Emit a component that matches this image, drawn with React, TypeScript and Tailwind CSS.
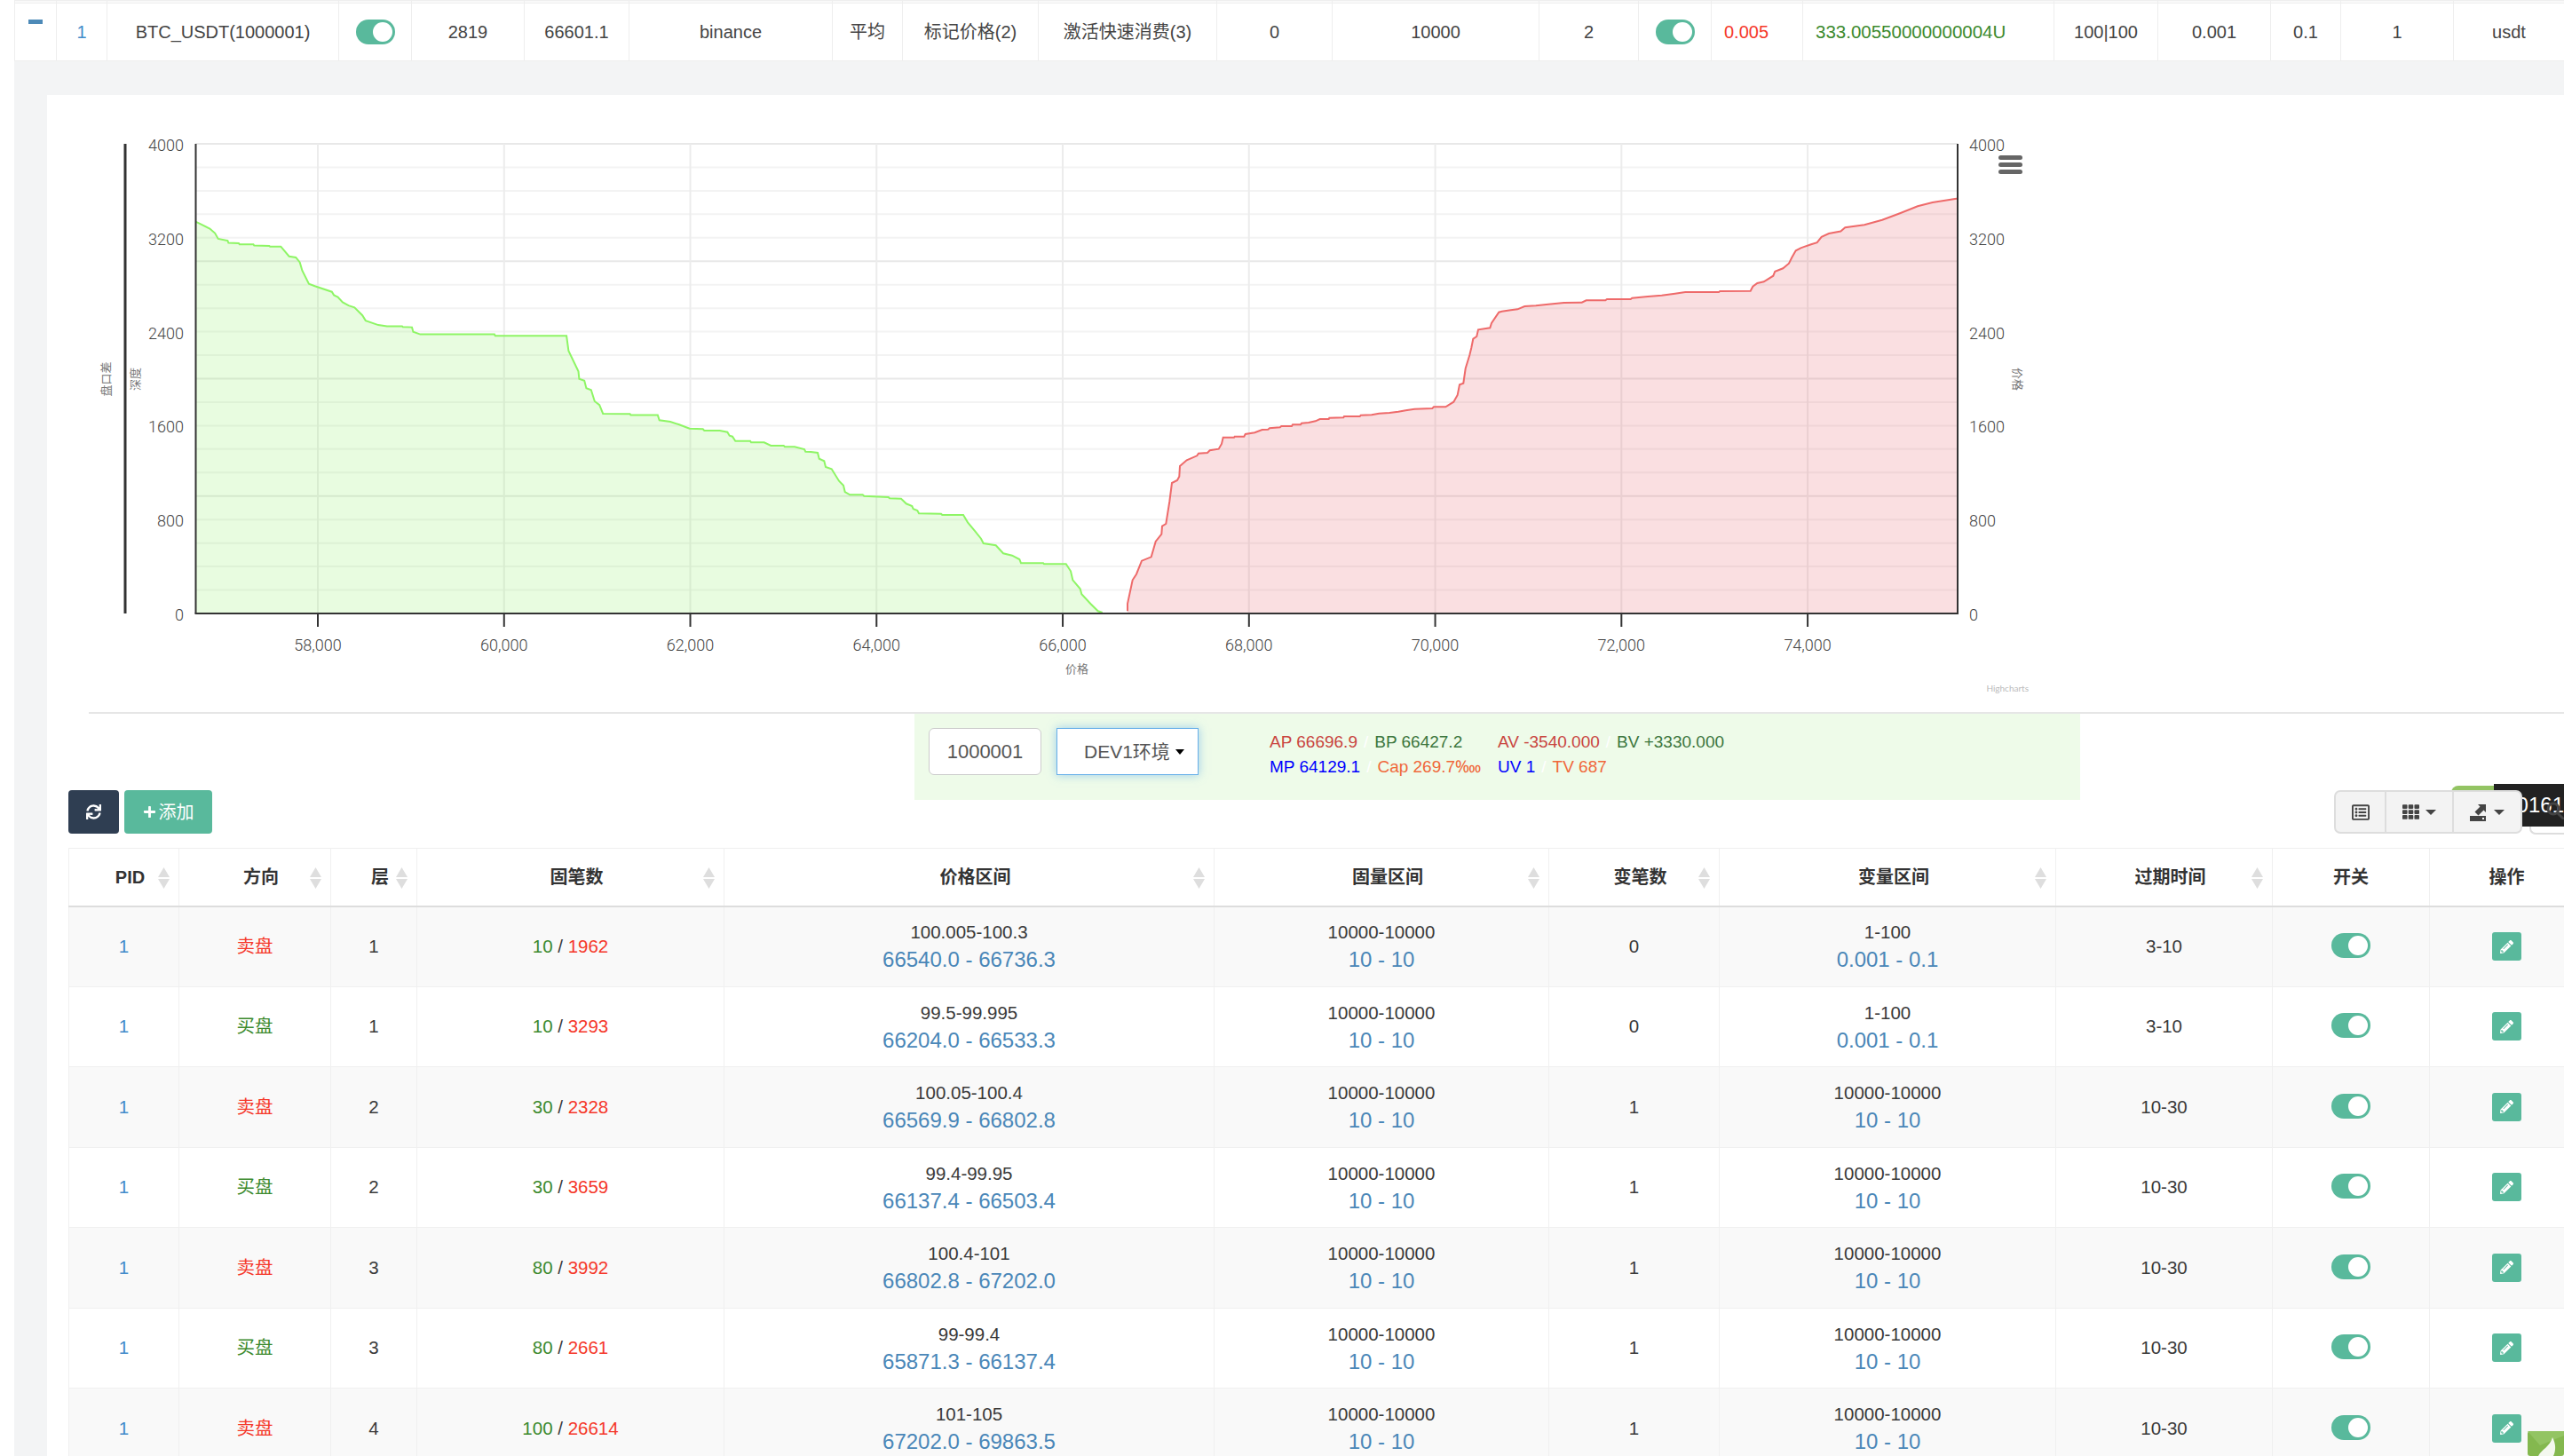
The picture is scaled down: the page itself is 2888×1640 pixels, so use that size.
import React from "react";
import { FaSync, FaPlus, FaPencilAlt, FaTh, FaRegListAlt } from "react-icons/fa";

type P = [number, number];
const map = (pts: P[], ox: number, oy: number, sx: number, sy: number): P[] =>
  pts.map(([x, y]) => [ox + x / sx, oy + y / sy]);

const green: P[] = [
  ...map([[360,285],[366,288],[395,303],[408,315],[416,330],[440,335],[442,341],[468,342],[470,345],[505,345],[507,348],[545,349],[547,351],[574,351],[595,377],[612,380],[622,393],[628,415],[645,451],[660,457],[703,472],[708,481],[718,486],[730,500],[745,509],[760,514],[780,535],[788,549],[820,561],[842,564],[880,564],[882,566],[905,567],[908,579],[926,586],[1113,586],[1115,590],[1295,590],[1300,630],[1325,685],[1327,705],[1340,710],[1345,730],[1357,735],[1366,765],[1378,775],[1387,798],[1455,799],[1457,802],[1525,802]], 60, 130, 2.24, 2.376),
  ...map([[8,100],[45,105],[75,115],[110,128],[155,130],[160,135],[212,135],[238,140],[245,152],[255,155],[265,170],[315,170],[318,175],[362,175],[385,186],[428,186],[432,190],[465,190],[498,198],[502,206],[520,207],[543,210],[548,230],[565,238],[570,258],[590,265],[615,305],[630,320],[635,342],[652,352],[695,352],[700,356],[782,360],[786,364],[825,365],[842,382],[862,390],[866,400],[880,405],[885,415],[960,416],[964,420],[1035,420],[1050,445],[1075,475],[1095,500],[1103,516],[1145,523],[1170,550],[1200,557]], 740, 440, 3, 3),
  ...map([[145,270],[150,283],[225,283],[228,286],[302,286],[318,310],[325,340],[350,370],[355,388],[385,420],[410,445],[425,450]], 1100, 540, 3, 3),
];

const red: P[] = [
  ...map([[510,445],[510,420],[527,340],[540,320],[558,275],[590,262],[605,210],[625,185],[627,158],[640,150],[652,75],[660,12]], 1100, 540, 3, 3),
  ...map([[60,612],[78,603],[85,590],[87,555],[110,535],[145,520],[150,512],[180,510],[188,502],[218,497],[228,480],[233,458],[270,458],[272,455],[304,455],[308,447],[340,442],[365,432],[385,431],[390,427],[425,424],[430,420],[465,420],[468,415],[495,415],[498,410],[522,408],[545,403],[560,396],[590,396],[592,392],[640,391],[642,387],[695,387],[698,383],[735,382],[760,377],[795,375],[825,371],[850,367],[880,362],[940,360],[945,355],[985,355],[1012,338],[1025,315],[1032,280],[1045,275],[1052,225],[1066,180],[1072,155],[1078,125],[1090,117],[1095,94],[1135,88],[1140,72],[1165,35],[1175,32]], 1300, 340, 3, 3),
  ...map([[185,328],[208,325],[232,315],[270,313],[312,308],[365,303],[425,302],[440,295],[505,295],[510,291],[590,291],[595,287],[648,282],[695,278],[740,272],[775,267],[888,267],[892,264],[995,263],[1003,248],[1018,237],[1040,232],[1072,212],[1078,197],[1105,187],[1125,170],[1135,150],[1148,127],[1165,118]], 1640, 240, 3, 3),
  ...map([[420,345],[440,340],[455,325],[480,316],[520,310],[535,300],[600,293],[660,280],[720,262],[780,243],[830,233],[916,222]], 1900, 130, 3, 2.376),
];

const line = (pts: P[]) => pts.map(([x, y], i) => `${i ? "L" : "M"}${x.toFixed(1)} ${y.toFixed(1)}`).join(" ");
const area = (pts: P[]) => `${line(pts)} L${pts[pts.length - 1][0].toFixed(1)} 691 L${pts[0][0].toFixed(1)} 691 Z`;

const L = 220.5, R = 2205, T = 162, B = 691;
const minors = Array.from({ length: 21 }, (_, i) => i);
const yLabels = ["0", "800", "1600", "2400", "3200", "4000"];
const xTicks = [58, 60, 62, 64, 66, 68, 70, 72, 74];
const xOf = (k: number) => 358 + (k - 58) * 104.88;
const chartFont = "Roboto, sans-serif";

function Chart() {
  return (
    <svg width="2300" height="695" viewBox="53 107 2300 695" className="block">
      {minors.map((i) => {
        const y = B - (i * (B - T)) / 20;
        return <line key={i} x1={L} x2={R} y1={y} y2={y} stroke={i % 5 === 0 ? "#e8e8e8" : "#f3f3f3"} strokeWidth="2" />;
      })}
      {xTicks.map((k) => (
        <line key={k} x1={xOf(k)} x2={xOf(k)} y1={T} y2={B} stroke="#ececec" strokeWidth="2" />
      ))}
      <path d={area(green)} fill="#8ef265" fillOpacity="0.2" />
      <path d={area(red)} fill="#e6505a" fillOpacity="0.18" />
      <path d={line(green)} fill="none" stroke="#8ef565" strokeWidth="2" />
      <path d={line(red)} fill="none" stroke="#ee6a6a" strokeWidth="2" />
      <rect x="139.5" y={T} width="3" height={B - T} fill="#333" />
      <line x1={L} x2={L} y1={T} y2={B} stroke="#333" strokeWidth="2" />
      <line x1={R} x2={R} y1={T} y2={B} stroke="#333" strokeWidth="2" />
      <line x1={L - 1} x2={R + 1} y1={B} y2={B} stroke="#333" strokeWidth="2" />
      {xTicks.map((k) => (
        <g key={k}>
          <line x1={xOf(k)} x2={xOf(k)} y1={B} y2={B + 15} stroke="#333" strokeWidth="2" />
          <text x={xOf(k)} y="733" textAnchor="middle" fontSize="18" fontWeight="300" fill="#444" fontFamily={chartFont}>
            {k},000
          </text>
        </g>
      ))}
      {yLabels.map((t, i) => {
        const y = B - (i * (B - T)) / 5 + 8;
        return (
          <g key={t}>
            <text x="207" y={y} textAnchor="end" fontSize="18" fontWeight="300" fill="#444" fontFamily={chartFont}>{t}</text>
            <text x="2218" y={y} fontSize="18" fontWeight="300" fill="#444" fontFamily={chartFont}>{t}</text>
          </g>
        );
      })}
      <text transform="translate(124 427) rotate(-90)" textAnchor="middle" fontSize="13" fill="#777" fontFamily="'Noto Sans CJK SC', sans-serif">盘口差</text>
      <text transform="translate(157 427) rotate(-90)" textAnchor="middle" fontSize="13" fill="#777" fontFamily="'Noto Sans CJK SC', sans-serif">深度</text>
      <text transform="translate(2268 427) rotate(90)" textAnchor="middle" fontSize="13" fill="#777" fontFamily="'Noto Sans CJK SC', sans-serif">价格</text>
      <text x="1213" y="758" textAnchor="middle" fontSize="13" fill="#777" fontFamily="'Noto Sans CJK SC', sans-serif">价格</text>
      <text x="2285" y="779" textAnchor="end" fontSize="10" fill="#bbb" fontFamily="Lato, sans-serif">Highcharts</text>
      <g fill="#666">
        <rect x="2251" y="175" width="27" height="5" rx="2.5" />
        <rect x="2251" y="183" width="27" height="5" rx="2.5" />
        <rect x="2251" y="191" width="27" height="5" rx="2.5" />
      </g>
    </svg>
  );
}

function Switch() {
  return (
    <div className="inline-flex w-[44px] h-[28px] rounded-full bg-[#59b99c] items-center justify-end pr-[3px] align-middle">
      <div className="w-[22px] h-[22px] rounded-full bg-white" />
    </div>
  );
}

function Sort() {
  return (
    <svg width="13" height="24" viewBox="0 0 13 24" className="absolute right-[10px] top-[21px]">
      <path d="M6.5 0 L13 11 L0 11 Z M0 13 L13 13 L6.5 24 Z" fill="#dedede" />
    </svg>
  );
}

const topCols = [47, 57, 261, 82, 127, 118, 229, 79, 153, 201, 130, 233, 112, 82, 103, 283, 117, 127, 79, 127, 125];
const td = "border border-[#eeeeee] text-center text-[20px] text-[#444] whitespace-nowrap";

function TopTable() {
  return (
    <table className="table-fixed border-collapse w-[2872px] bg-white">
      <colgroup>
        {topCols.map((w, i) => (
          <col key={i} style={{ width: w }} />
        ))}
      </colgroup>
      <tbody>
        <tr className="h-[3px] bg-[#f9f9f9]">
          {topCols.map((_, i) => (
            <td key={i} className="border border-[#eeeeee] p-0 leading-[0px] text-[0px]" />
          ))}
        </tr>
        <tr className="h-[65px]">
          <td className={td}>
            <div className="w-[16px] h-[5px] bg-[#4d8ab8] ml-[15px] -mt-[14px]" />
          </td>
          <td className={td + " !text-[#428bca]"}>1</td>
          <td className={td}>BTC_USDT(1000001)</td>
          <td className={td}><div className="-mt-[3px]"><Switch /></div></td>
          <td className={td}>2819</td>
          <td className={td}>66601.1</td>
          <td className={td}>binance</td>
          <td className={td}>平均</td>
          <td className={td}>标记价格(2)</td>
          <td className={td}>激活快速消费(3)</td>
          <td className={td}>0</td>
          <td className={td}>10000</td>
          <td className={td}>2</td>
          <td className={td}><div className="-mt-[3px]"><Switch /></div></td>
          <td className={td + " !text-left pl-[14px] !text-[#f5382a]"}>0.005</td>
          <td className={td + " !text-left pl-[14px] !text-[#3c8a2e] !text-[20.5px]"}>333.00550000000004U</td>
          <td className={td}>100|100</td>
          <td className={td}>0.001</td>
          <td className={td}>0.1</td>
          <td className={td}>1</td>
          <td className={td}>usdt</td>
        </tr>
      </tbody>
    </table>
  );
}

const R1 = "text-[#c9453f]";
const G1 = "text-[#3c763d]";
const B1 = "text-[#0000ff]";
const O1 = "text-[#f0683a]";

function InfoBar() {
  const Sep = () => <span className="text-white mx-[7px]">/</span>;
  return (
    <div className="ml-[977px] w-[1313px] h-[97px] bg-[#eefbe9] flex items-start pl-[16px] pt-[16px]">
      <div className="w-[127px] h-[53px] border border-[#cccccc] rounded-[6px] bg-white flex items-center justify-center text-[22px] text-[#555]">
        1000001
      </div>
      <div className="ml-[17px] w-[160px] h-[53px] border border-[#66afe9] bg-white flex items-center pl-[30px] text-[21px] text-[#555] shadow-[0_0_10px_rgba(102,175,233,0.6)]">
        DEV1环境
        <span className="ml-[6px] w-0 h-0 border-x-[5px] border-t-[6px] border-x-transparent border-t-black" />
      </div>
      <div className="ml-[80px] mt-[2px] grid grid-cols-[257px_auto] text-[19px] leading-[28px] whitespace-nowrap">
        <div><span className={R1}>AP 66696.9</span><Sep /><span className={G1}>BP 66427.2</span></div>
        <div><span className={R1}>AV -3540.000</span><Sep /><span className={G1}>BV +3330.000</span></div>
        <div><span className={B1}>MP 64129.1</span><Sep /><span className={O1}>Cap 269.7‱</span></div>
        <div><span className={B1}>UV 1</span><Sep /><span className={O1}>TV 687</span></div>
      </div>
    </div>
  );
}

function ExportIcon() {
  return (
    <svg width="20" height="20" viewBox="0 0 20 20" fill="#444">
      <path d="M0 14 H18 V20 H0 Z" />
      <path d="M9 1 H18 V10 L15.5 7.5 L9.5 13.5 L5.5 9.5 L11.5 3.5 Z" />
      <rect x="14" y="16" width="2" height="2" fill="#f3f3f3" />
    </svg>
  );
}

function Toolbar() {
  const Caret = () => <span className="w-0 h-0 border-x-[6px] border-t-[6px] border-x-transparent border-t-[#444] ml-[7px]" />;
  return (
    <div className="relative z-10 flex h-[49px] bg-[#f3f3f3] border-2 border-[#dddddd] rounded-[7px] text-[#444]">
      <div className="w-[57px] flex items-center justify-center border-r-2 border-[#dddddd]"><FaRegListAlt size={20} /></div>
      <div className="w-[76px] flex items-center justify-center border-r-2 border-[#dddddd]"><FaTh size={19} /><Caret /></div>
      <div className="w-[75px] flex items-center justify-center"><ExportIcon /><Caret /></div>
    </div>
  );
}

const cols = [124, 171, 97, 346, 552, 377, 192, 379, 244, 177, 174];
const heads = ["PID", "方向", "层", "固笔数", "价格区间", "固量区间", "变笔数", "变量区间", "过期时间", "开关", "操作"];

type Row = { s: boolean; l: number; a: number; b: number; p: string; q: string; n: number; v?: boolean; e: string };
const rows: Row[] = [
  { s: true, l: 1, a: 10, b: 1962, p: "100.005-100.3", q: "66540.0 - 66736.3", n: 0, e: "3-10" },
  { s: false, l: 1, a: 10, b: 3293, p: "99.5-99.995", q: "66204.0 - 66533.3", n: 0, e: "3-10" },
  { s: true, l: 2, a: 30, b: 2328, p: "100.05-100.4", q: "66569.9 - 66802.8", n: 1, v: true, e: "10-30" },
  { s: false, l: 2, a: 30, b: 3659, p: "99.4-99.95", q: "66137.4 - 66503.4", n: 1, v: true, e: "10-30" },
  { s: true, l: 3, a: 80, b: 3992, p: "100.4-101", q: "66802.8 - 67202.0", n: 1, v: true, e: "10-30" },
  { s: false, l: 3, a: 80, b: 2661, p: "99-99.4", q: "65871.3 - 66137.4", n: 1, v: true, e: "10-30" },
  { s: true, l: 4, a: 100, b: 26614, p: "101-105", q: "67202.0 - 69863.5", n: 1, v: true, e: "10-30" },
];

const cell = "border border-[#f0f0f0] text-center text-[20.5px] text-[#3a3a3a] whitespace-nowrap";

function Two({ a, b }: { a: string; b: string }) {
  return (
    <div className="leading-[31px] -mt-[2px]">
      <div>{a}</div>
      <div className="text-[24px] text-[#4a87b8]">{b}</div>
    </div>
  );
}

function DataTable() {
  return (
    <table className="table-fixed border-collapse w-[2833px] ml-[24px] mt-[16px]">
      <colgroup>
        {cols.map((w, i) => (
          <col key={i} style={{ width: w }} />
        ))}
      </colgroup>
      <thead>
        <tr className="h-[65px] border-b-2 border-[#dddddd]">
          {heads.map((h, i) => (
            <th key={h} className="relative border-x border-t border-[#f0f0f0] text-center text-[20px] font-semibold text-[#333] p-0">
              <span className={i < 9 ? "pl-[14px]" : ""}>{h}</span>
              {i < 9 && <Sort />}
            </th>
          ))}
        </tr>
      </thead>
      <tbody>
        {rows.map((r, i) => (
          <tr key={i} className={i % 2 === 0 ? "h-[91px] bg-[#f9f9f9]" : "h-[90px] bg-white"}>
            <td className={cell + " !text-[#428bca]"}>1</td>
            <td className={cell + (r.s ? " !text-[#f5382a]" : " !text-[#3c8a2e]")}>{r.s ? "卖盘" : "买盘"}</td>
            <td className={cell}>{r.l}</td>
            <td className={cell}>
              <span className="text-[#3c8a2e]">{r.a}</span> / <span className="text-[#f5382a]">{r.b}</span>
            </td>
            <td className={cell}><Two a={r.p} b={r.q} /></td>
            <td className={cell}><Two a="10000-10000" b="10 - 10" /></td>
            <td className={cell}>{r.n}</td>
            <td className={cell}>
              {r.v ? <Two a="10000-10000" b="10 - 10" /> : <Two a="1-100" b="0.001 - 0.1" />}
            </td>
            <td className={cell}>{r.e}</td>
            <td className={cell}><div className="-mt-[5px]"><Switch /></div></td>
            <td className={cell}>
              <div className="inline-flex w-[33px] h-[32px] rounded-[3px] bg-[#59b99c] items-center justify-center text-white">
                <FaPencilAlt size={15} />
              </div>
            </td>
          </tr>
        ))}
      </tbody>
    </table>
  );
}

export default function App() {
  return (
    <div className="relative w-[2888px] h-[1640px] overflow-hidden bg-white [font-family:'Liberation_Sans','Noto_Sans_CJK_SC',sans-serif]">
      <div className="ml-[16px] h-full bg-[#f3f4f5]">
        <TopTable />
        <div className="ml-[37px] mt-[38px] bg-white h-[1540px]">
          <Chart />
          <div className="ml-[47px] h-[2px] bg-[#e6e6e6]" />
          <InfoBar />
          <div className="ml-[24px] -mt-[11px] w-[2833px] pr-[69px] flex items-start justify-between">
            <div className="flex gap-[6px] h-[49px]">
              <div className="w-[57px] rounded-[4px] bg-[#2f3e52] flex items-center justify-center text-white"><FaSync size={17} /></div>
              <div className="w-[99px] rounded-[4px] bg-[#59b99c] flex items-center justify-center text-white text-[20px] gap-[3px]"><FaPlus size={15} />添加</div>
            </div>
            <Toolbar />
          </div>
          <DataTable />
        </div>
      </div>

      {/* floating widgets peeking out behind the toolbar */}
      <div className="absolute left-[2761px] top-[885px] w-[60px] h-[20px] rounded-tl-[8px] bg-[#93c463]" />
      <div className="absolute left-[2809px] top-[883px] w-[79px] h-[48px] bg-[#222222] flex items-center justify-end text-white text-[24px]">
        0161
      </div>
      <svg className="absolute left-[2868px] top-[903px]" width="20" height="20" viewBox="0 0 20 20" fill="none" stroke="#444" strokeWidth="3">
        <circle cx="8" cy="8" r="6" />
        <path d="M13 13 L20 20" />
      </svg>
      <div className="absolute left-[2849px] top-[931px] w-[40px] h-[9px] bg-white border-l-2 border-b-2 border-[#dddddd] rounded-bl-[7px]" />
      <svg className="absolute left-[2847px] top-[1612px]" width="41" height="28" viewBox="0 0 41 28">
        <rect width="41" height="28" fill="#84b84f" rx="3" />
        <path d="M0 0 L41 0 L41 5 L14 16 Z" fill="#93c463" />
        <path d="M12 28 C16 20 25 18 28 7 C32 14 32 22 29 28 Z" fill="#f4f8ef" />
      </svg>
    </div>
  );
}
